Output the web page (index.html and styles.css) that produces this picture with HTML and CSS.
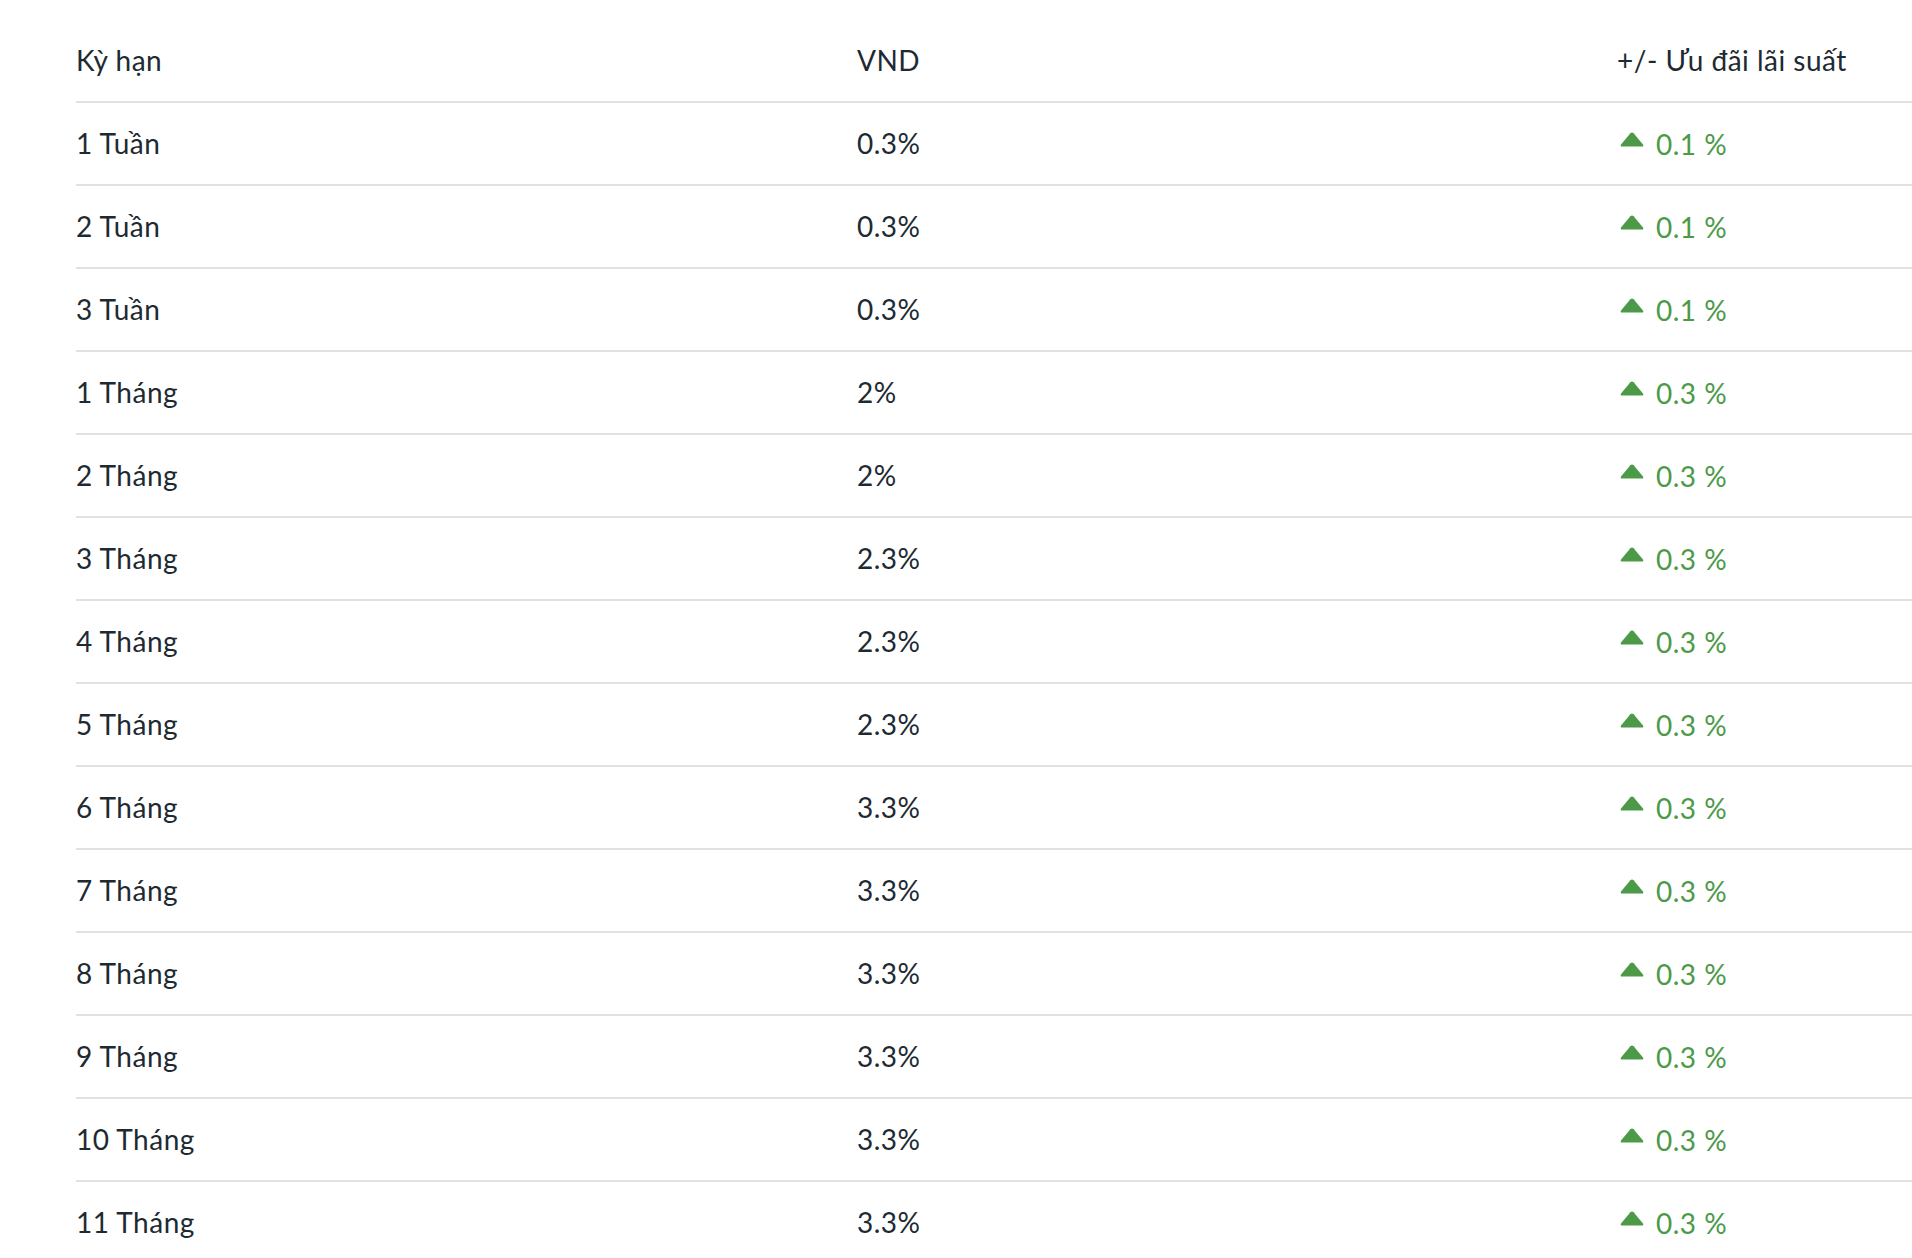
FILE: index.html
```html
<!DOCTYPE html>
<html lang="vi">
<head>
<meta charset="utf-8">
<title>Lãi suất</title>
<link rel="stylesheet" href="styles.css">
</head>
<body>
<table class="rates">
  <colgroup><col class="c1"><col class="c2"><col class="c3"></colgroup>
  <thead>
    <tr><th>Kỳ hạn</th><th>VND</th><th class="bonus-h">+/- Ưu đãi lãi suất</th></tr>
  </thead>
  <tbody>
    <tr><td>1 Tuần</td><td>0.3%</td><td><span class="up"><svg class="tri" viewBox="0 0 24 15"><path d="M10.4 1.2 Q12 -0.2 13.6 1.2 L23 12.6 Q24 14.6 21.8 14.6 L2.2 14.6 Q0 14.6 1 12.6 Z"/></svg>0.1 %</span></td></tr>
    <tr><td>2 Tuần</td><td>0.3%</td><td><span class="up"><svg class="tri" viewBox="0 0 24 15"><path d="M10.4 1.2 Q12 -0.2 13.6 1.2 L23 12.6 Q24 14.6 21.8 14.6 L2.2 14.6 Q0 14.6 1 12.6 Z"/></svg>0.1 %</span></td></tr>
    <tr><td>3 Tuần</td><td>0.3%</td><td><span class="up"><svg class="tri" viewBox="0 0 24 15"><path d="M10.4 1.2 Q12 -0.2 13.6 1.2 L23 12.6 Q24 14.6 21.8 14.6 L2.2 14.6 Q0 14.6 1 12.6 Z"/></svg>0.1 %</span></td></tr>
    <tr><td>1 Tháng</td><td>2%</td><td><span class="up"><svg class="tri" viewBox="0 0 24 15"><path d="M10.4 1.2 Q12 -0.2 13.6 1.2 L23 12.6 Q24 14.6 21.8 14.6 L2.2 14.6 Q0 14.6 1 12.6 Z"/></svg>0.3 %</span></td></tr>
    <tr><td>2 Tháng</td><td>2%</td><td><span class="up"><svg class="tri" viewBox="0 0 24 15"><path d="M10.4 1.2 Q12 -0.2 13.6 1.2 L23 12.6 Q24 14.6 21.8 14.6 L2.2 14.6 Q0 14.6 1 12.6 Z"/></svg>0.3 %</span></td></tr>
    <tr><td>3 Tháng</td><td>2.3%</td><td><span class="up"><svg class="tri" viewBox="0 0 24 15"><path d="M10.4 1.2 Q12 -0.2 13.6 1.2 L23 12.6 Q24 14.6 21.8 14.6 L2.2 14.6 Q0 14.6 1 12.6 Z"/></svg>0.3 %</span></td></tr>
    <tr><td>4 Tháng</td><td>2.3%</td><td><span class="up"><svg class="tri" viewBox="0 0 24 15"><path d="M10.4 1.2 Q12 -0.2 13.6 1.2 L23 12.6 Q24 14.6 21.8 14.6 L2.2 14.6 Q0 14.6 1 12.6 Z"/></svg>0.3 %</span></td></tr>
    <tr><td>5 Tháng</td><td>2.3%</td><td><span class="up"><svg class="tri" viewBox="0 0 24 15"><path d="M10.4 1.2 Q12 -0.2 13.6 1.2 L23 12.6 Q24 14.6 21.8 14.6 L2.2 14.6 Q0 14.6 1 12.6 Z"/></svg>0.3 %</span></td></tr>
    <tr><td>6 Tháng</td><td>3.3%</td><td><span class="up"><svg class="tri" viewBox="0 0 24 15"><path d="M10.4 1.2 Q12 -0.2 13.6 1.2 L23 12.6 Q24 14.6 21.8 14.6 L2.2 14.6 Q0 14.6 1 12.6 Z"/></svg>0.3 %</span></td></tr>
    <tr><td>7 Tháng</td><td>3.3%</td><td><span class="up"><svg class="tri" viewBox="0 0 24 15"><path d="M10.4 1.2 Q12 -0.2 13.6 1.2 L23 12.6 Q24 14.6 21.8 14.6 L2.2 14.6 Q0 14.6 1 12.6 Z"/></svg>0.3 %</span></td></tr>
    <tr><td>8 Tháng</td><td>3.3%</td><td><span class="up"><svg class="tri" viewBox="0 0 24 15"><path d="M10.4 1.2 Q12 -0.2 13.6 1.2 L23 12.6 Q24 14.6 21.8 14.6 L2.2 14.6 Q0 14.6 1 12.6 Z"/></svg>0.3 %</span></td></tr>
    <tr><td>9 Tháng</td><td>3.3%</td><td><span class="up"><svg class="tri" viewBox="0 0 24 15"><path d="M10.4 1.2 Q12 -0.2 13.6 1.2 L23 12.6 Q24 14.6 21.8 14.6 L2.2 14.6 Q0 14.6 1 12.6 Z"/></svg>0.3 %</span></td></tr>
    <tr><td>10 Tháng</td><td>3.3%</td><td><span class="up"><svg class="tri" viewBox="0 0 24 15"><path d="M10.4 1.2 Q12 -0.2 13.6 1.2 L23 12.6 Q24 14.6 21.8 14.6 L2.2 14.6 Q0 14.6 1 12.6 Z"/></svg>0.3 %</span></td></tr>
    <tr><td>11 Tháng</td><td>3.3%</td><td><span class="up"><svg class="tri" viewBox="0 0 24 15"><path d="M10.4 1.2 Q12 -0.2 13.6 1.2 L23 12.6 Q24 14.6 21.8 14.6 L2.2 14.6 Q0 14.6 1 12.6 Z"/></svg>0.3 %</span></td></tr>
  </tbody>
</table>
</body>
</html>
```
FILE: styles.css
```css
html, body {
  margin: 0;
  padding: 0;
  background: #ffffff;
  overflow: hidden;
}
body {
  font-family: "Lato", "Noto Sans", sans-serif;
  font-size: 28px;
  letter-spacing: 0.5px;
  color: #1e2a32;
}
.rates {
  margin: 20px 0 0 76px;
  width: 1836px;
  border-collapse: collapse;
  table-layout: fixed;
}
.c1 { width: 781px; }
.c2 { width: 760px; }
.c3 { width: 295px; }
.rates th,
.rates td {
  height: 79px;
  padding: 0 0 2px 0;
  text-align: left;
  vertical-align: middle;
  font-weight: 400;
  border-bottom: 2px solid #e1e1e1;
  white-space: nowrap;
}
.up {
  color: #4c9a48;
  display: inline-flex;
  align-items: center;
  gap: 12px;
  padding-left: 3px;
}
.tri {
  width: 24px;
  height: 15px;
  fill: #4c9a48;
  position: relative;
  top: -5px;
}
```
